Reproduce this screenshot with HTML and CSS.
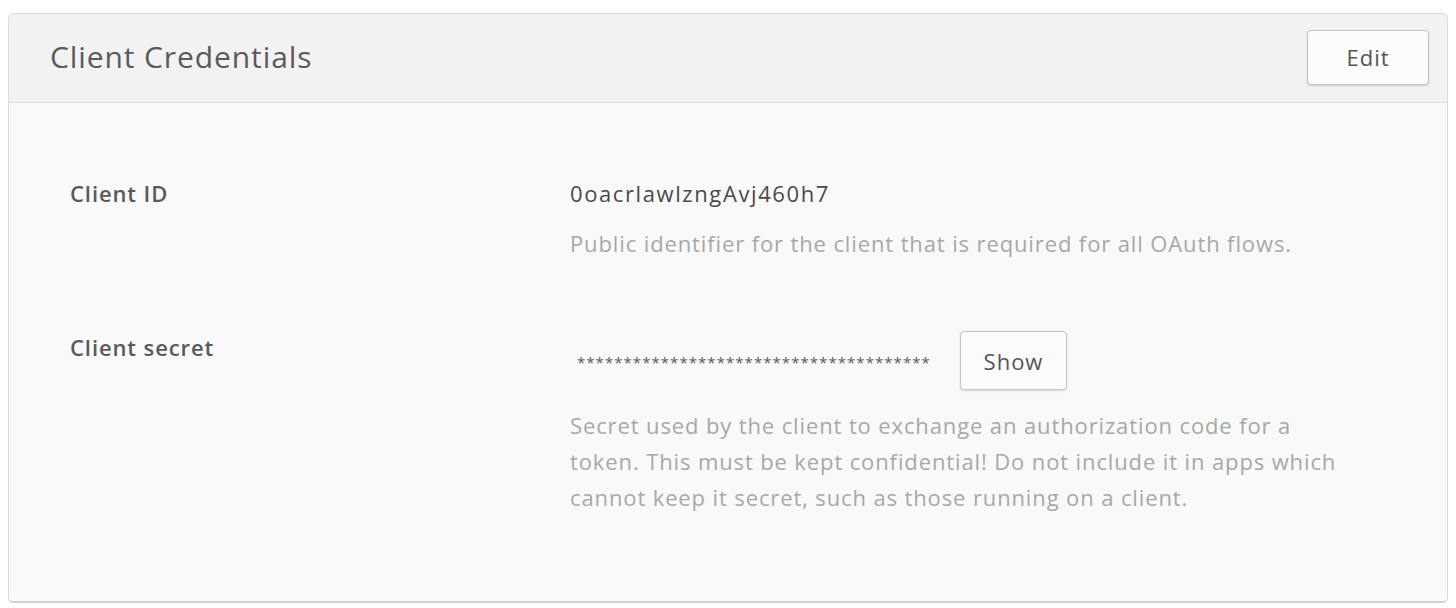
FILE: index.html
```html
<!DOCTYPE html>
<html>
<head>
<meta charset="utf-8">
<link rel="stylesheet" href="styles.css">
</head>
<body>
<div class="card">
  <div class="card-header">
    <h2 class="card-title">Client Credentials</h2>
    <button class="btn btn-edit">Edit</button>
  </div>
  <div class="card-body">
    <div class="row row-id">
      <div class="label">Client ID</div>
      <div class="field">
        <div class="value">0oacrlawlzngAvj460h7</div>
        <div class="desc">Public identifier for the client that is required for all OAuth flows.</div>
      </div>
    </div>
    <div class="row row-secret">
      <div class="label">Client secret</div>
      <div class="field">
        <div class="secret-line">
          <span class="mask">**************************************</span>
          <button class="btn btn-show">Show</button>
        </div>
        <div class="desc desc-multi">Secret used by the client to exchange an authorization code for a token. This must be kept confidential! Do not include it in apps which cannot keep it secret, such as those running on a client.</div>
      </div>
    </div>
  </div>
</div>
</body>
</html>
```
FILE: styles.css
```css
html, body {
  margin: 0;
  padding: 0;
  background: #ffffff;
}
body {
  padding: 13px 8px 0 8px;
  font-family: "Open Sans", "Lato", sans-serif;
}
.card {
  width: 1440px;
  height: 590px;
  box-sizing: border-box;
  border: 1px solid #dcdcdc;
  border-bottom: 2px solid #d2d2d2;
  border-radius: 5px;
  background: #f9f9f9;
  overflow: hidden;
}
.card-header {
  height: 89px;
  box-sizing: border-box;
  background: #f2f2f2;
  border-bottom: 1px solid #dcdcdc;
  display: flex;
  align-items: center;
  justify-content: space-between;
  padding: 0 18px 0 41px;
}
.card-title {
  margin: 0 0 4px 0;
  font-weight: 400;
  font-size: 30px;
  letter-spacing: 0.9px;
  color: #5a5a5a;
}
.btn {
  font-family: inherit;
  background: #fbfbfb;
  border: 1px solid #c4c4c4;
  border-radius: 4px;
  box-shadow: 0 1px 2px rgba(0,0,0,0.15);
  color: #555;
  cursor: pointer;
  letter-spacing: 1px;
  padding: 0;
}
.btn-edit {
  width: 122px;
  height: 55px;
  font-size: 22px;
  margin-bottom: 2px;
}
.card-body {
  padding: 74px 0 0 61px;
}
.row {
  display: flex;
}
.label {
  width: 500px;
  flex: none;
  font-weight: 600;
  font-size: 22px;
  letter-spacing: 0.9px;
  color: #5a5a5a;
  line-height: 32px;
}
.field {
  flex: 1;
}
.value {
  font-size: 22px;
  letter-spacing: 1.6px;
  color: #4a4a4a;
  line-height: 32px;
}
.desc {
  font-size: 22px;
  letter-spacing: 0.88px;
  color: #a8a8a8;
  line-height: 36px;
  margin-top: 16px;
}
.row-secret {
  margin-top: 70px;
}
.secret-line {
  display: flex;
  align-items: center;
}
.mask {
  font-size: 15px;
  color: #5a5a5a;
  letter-spacing: 1.05px;
  margin-left: 7px;
  margin-top: 2px;
  width: 383px;
}
.btn-show {
  width: 107px;
  height: 59px;
  font-size: 22px;
}
.desc-multi {
  width: 790px;
  margin-top: 17px;
}
```
